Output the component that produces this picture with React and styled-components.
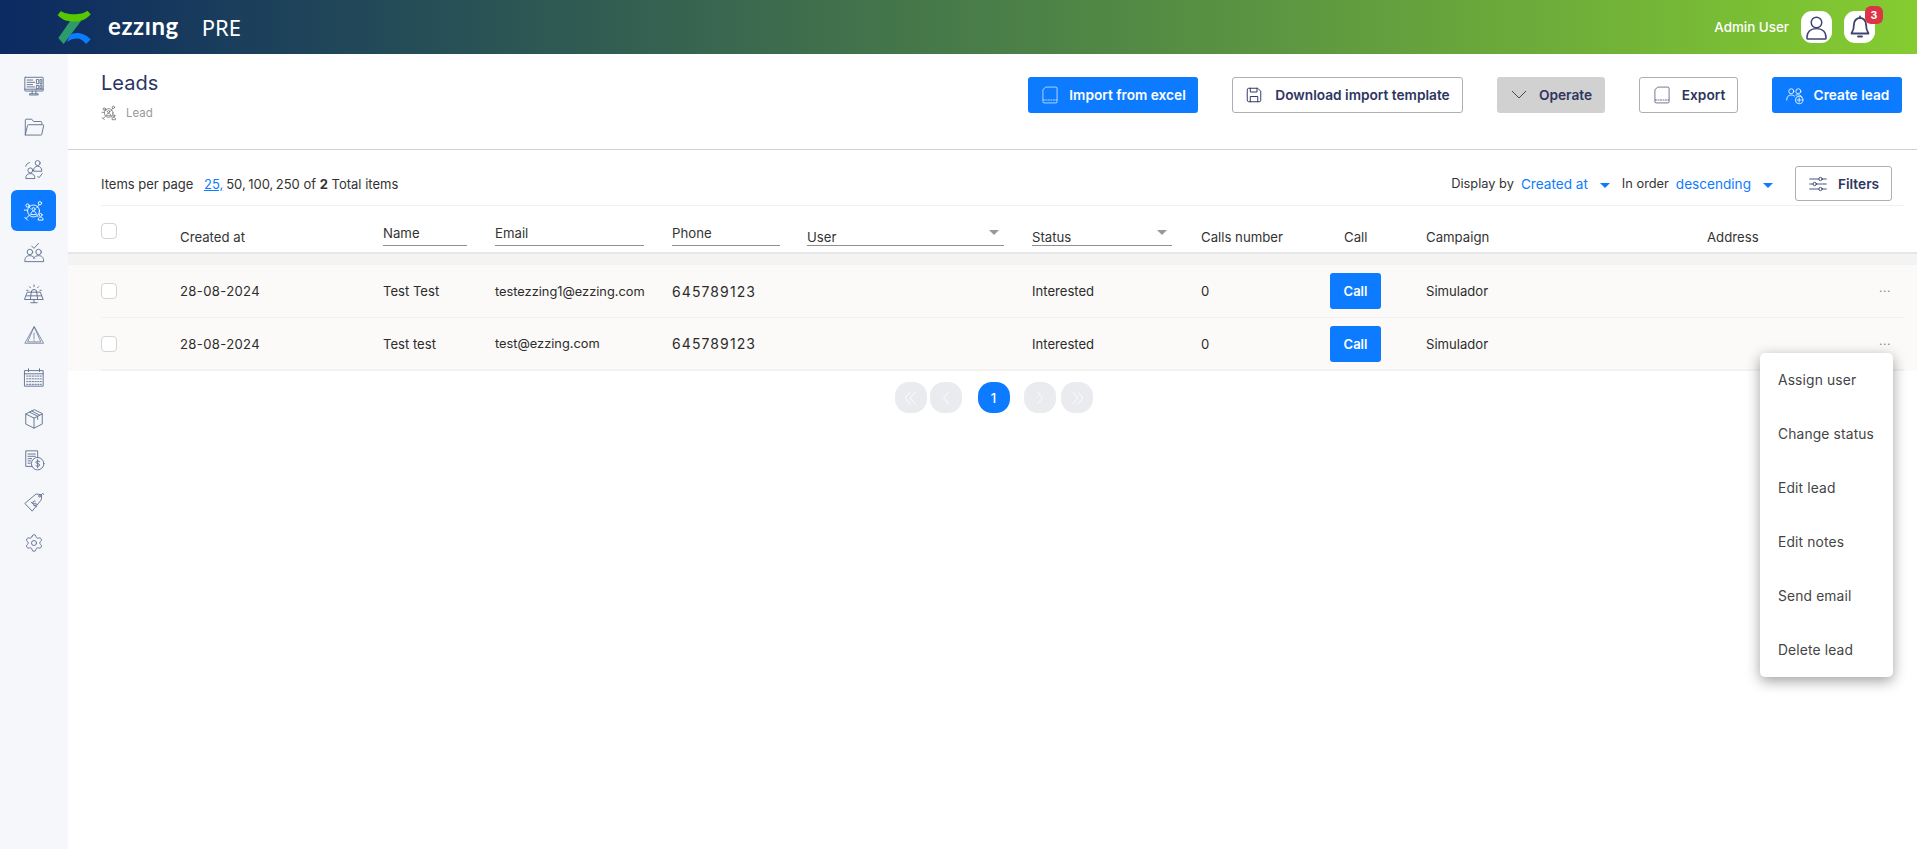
import React from 'react';
import styled, { createGlobalStyle } from 'styled-components';
import { Settings } from 'lucide-react';

const Global = createGlobalStyle`
  html, body { margin: 0; padding: 0; height: 100%; background: #fff; overflow: hidden; }
  body { font-family: "Inter", "Noto Sans", sans-serif; color: #2c2c2c; }
  #root { height: 100%; }
  * { box-sizing: border-box; }
`;

const Page = styled.div`display: flex; flex-direction: column; height: 849px;`;
const TopBar = styled.header`
  height: 54px; flex: none; display: flex; align-items: center;
  padding: 0 42px 0 57px;
  background: linear-gradient(90deg, #0b2a62 0%, #85cc30 100%);
`;
const Brand = styled.div`display: flex; align-items: center; flex: 1;`;
const BrandName = styled.span`
  font-family: "Lato", sans-serif; font-weight: 700; font-size: 24px; letter-spacing: .6px; color: #fff; margin-left: 17px; line-height: 1; position: relative; top: -1px;
`;
const Env = styled.span`font-family: "Noto Sans", sans-serif; font-size: 22px; color: #fff; margin-left: 23px;`;
const UserName = styled.span`font-size: 13.400px; font-weight: 500; color: #fff; margin-right: 12px;`;
const RoundBtn = styled.div`
  width: 31px; height: 32px; border-radius: 11px; background: #fff; display: flex; align-items: center; justify-content: center;
  position: relative; margin-left: ${p => p.$gap || 0}px; color: #3f4570;
`;
const Badge = styled.span`
  position: absolute; top: -5px; right: -8px; width: 18px; height: 18px; border-radius: 6px; background: #dc3545; color: #fff;
  font-size: 10.500px; font-weight: 700; display: flex; align-items: center; justify-content: center;
`;

const Body = styled.div`display: flex; flex: 1; min-height: 0; position: relative;`;
const Sidebar = styled.nav`
  width: 68px; flex: none; background: #f5f7fa; padding: 11px 1px 0 0; display: flex; flex-direction: column; align-items: center;
`;
const NavItem = styled.div`
  width: 45px; height: 41.600px; flex: none; border-radius: 6px; display: flex; align-items: center; justify-content: center;
  color: ${p => (p.$active ? '#fff' : '#5f6e8e')}; background: ${p => (p.$active ? '#0d7bff' : 'transparent')};
`;
const Main = styled.main`flex: 1; min-width: 0; display: flex; flex-direction: column; position: relative;`;
const PageHead = styled.div`
  height: 96px; flex: none; border-bottom: 1px solid #cfd2dc; display: flex; justify-content: space-between; padding: 23px 15px 0 33px;
`;
const TitleBlock = styled.div`display: flex; flex-direction: column; margin-top: -4px;`;
const Title = styled.h1`margin: 0; font-size: 20px; font-weight: 400; color: #2b3566; line-height: 20px;`;
const Crumb = styled.div`display: flex; align-items: center; gap: 9px; margin-top: 12px; font-size: 11.500px; color: #9a9a9a; height: 16px;`;
const CrumbIcon = styled.span`display: flex; color: #5c5c5c;`;
const Actions = styled.div`display: flex; align-items: flex-start; gap: 34px;`;
const ActionBtn = styled.button`
  height: ${p => p.$h || 36}px; width: ${p => p.$w}px; border-radius: 3px; display: flex; align-items: center; justify-content: center; gap: ${p => p.$g || 10}px;
  font-family: inherit; font-size: 13.700px; font-weight: 600; padding: 0; cursor: pointer; white-space: nowrap;
  ${p => p.$kind === 'primary' && 'background:#0d7bff;color:#fff;border:none;'}
  ${p => p.$kind === 'outline' && 'background:#fff;color:#2e3560;border:1px solid #aeaeb4;'}
  ${p => p.$kind === 'muted' && 'background:#d1d1d1;color:#2e3560;border:none;'}
`;

const Toolbar = styled.div`
  height: 56px; flex: none; margin: 0 13px 0 33px; padding: 16px 12px 0 0; border-bottom: 1px solid #f0f0f0; display: flex; align-items: flex-start; justify-content: space-between;
  font-size: 13px; color: #333;
`;
const Per = styled.div`display: flex; align-items: center; white-space: pre; height: 35px;`;
const PerLink = styled.a`color: #0d7bff; text-decoration: underline; margin: 0 3px 0 7px;`;
const PerList = styled.span`word-spacing: -1.200px;`;
const Sort = styled.div`display: flex; align-items: center; white-space: pre; height: 35px; font-size: 12.800px;`;
const SortVal = styled.span`color: #0d7bff; margin-left: 7px; font-size: 13.600px;`;
const Caret = styled.span`
  width: 0; height: 0; border-left: 5.500px solid transparent; border-right: 5.500px solid transparent; border-top: 5.500px solid #0d7bff;
  margin: 3px ${p => p.$mr || 12}px 0 12px;
`;

const Grid = styled.div`
  display: grid; grid-template-columns: 79px 203px 112px 177px 135px 225px 169px 129px 96px 281px 172px 1fr;
  padding-left: 33px;
`;
const HeadRow = styled(Grid)`height: 48px; flex: none; border-bottom: 2px solid #e6e6e6; font-size: 13.200px; color: #333;`;
const Band = styled.div`height: 11px; flex: none; background: #f3f3f3;`;
const Rows = styled.div`background: #fbfaf8;`;
const Row = styled(Grid)`height: ${p => p.$h}px; align-items: center; font-size: 13.100px; color: #2c2c2c;`;
const RowLine = styled.div`height: ${p => p.$h || 1}px; margin: 0 13px 0 33px; background: #f3f2f0;`;
const Num = styled.span`letter-spacing: ${p => p.$ls}px; font-size: ${p => p.$fs || 13.1}px;`;
const Mail = styled.span`font-size: 12.800px;`;
const Check = styled.span`
  width: 16px; height: 16px; border: 1px solid #d4d4d4; border-radius: 4px; background: #fff; display: block;
`;
const HeadCheck = styled(Check)`margin-top: 17px;`;
const HeadLabel = styled.div`padding-top: 23px; line-height: 16px; padding-left: ${p => p.$pl || 0}px;`;
const Filter = styled.div`
  width: ${p => p.$w}px; height: 24px; margin-top: 16px; border-bottom: 1px solid #909090; display: flex; justify-content: space-between;
  align-items: flex-end; line-height: ${p => (p.$select ? 16 : 20)}px; padding-bottom: ${p => (p.$select ? 0 : 2)}px; position: relative; font-size: 13.200px; color: #333;
`;
const FilterCaret = styled.span`
  position: absolute; right: 5px; top: 8px; width: 0; height: 0; border-left: 5px solid transparent; border-right: 5px solid transparent; border-top: 5px solid #999;
`;
const CallBtn = styled.button`
  width: 51px; height: 36px; background: #0d7bff; color: #fff; border: none; border-radius: 3px; font-family: inherit; font-size: 13px; font-weight: 600; padding: 0;
`;
const Dots = styled.span`font-size: 12px; color: #888; letter-spacing: .5px; line-height: 1; position: relative; top: -3px;`;

const Pager = styled.div`display: flex; justify-content: center; align-items: center; margin-top: 11px; padding-left: 2px;`;
const PageBtn = styled.span`
  width: 32px; height: 31px; border-radius: 14px; display: flex; align-items: center; justify-content: center;
  margin-left: ${p => p.$ml || 0}px; background: ${p => (p.$on ? '#0d7bff' : '#eaebef')}; color: #fff; font-size: 13px; font-weight: 500;
`;

const Menu = styled.div`
  position: absolute; left: 1692px; top: 299px; width: 133px; height: 324px; background: #fff; border-radius: 5px;
  box-shadow: 0 4px 14px rgba(0,0,0,.38); display: flex; flex-direction: column; z-index: 5;
`;
const MenuItem = styled.div`height: 54px; display: flex; align-items: center; padding-left: 18px; font-size: 13.800px; letter-spacing: .15px; color: #444; white-space: nowrap;`;

const Ico = ({ size = 22, sw = 1, children, vb = 24 }) => (
  <svg width={size} height={size} viewBox={`0 0 ${vb} ${vb}`} fill="none" stroke="currentColor" strokeWidth={sw} strokeLinecap="round" strokeLinejoin="round">{children}</svg>
);

const Logo = () => (
  <svg width="34" height="34" viewBox="20 15 103 103">
    <path d="M60 48 L93 48 L40 118 L24 100 Z" fill="#2e9a6c" />
    <path d="M22 30 L32 18 C45 30 95 32 112 17 L122 28 C108 45 90 50 75 50 C50 50 35 45 22 30 Z" fill="#57c800" />
    <path d="M58 92 C75 78 105 85 122 104 L108 118 C95 100 75 95 50 112 Z" fill="#0d7bff" />
  </svg>
);

const LeadIcon = ({ size = 22 }) => (
  <Ico size={size}>
    <circle cx="11.500" cy="12" r="6.500" />
    <circle cx="11.500" cy="10" r="1.700" />
    <path d="M8.500 15.500c0-2 1.300-3 3-3s3 1 3 3z" />
    <circle cx="5" cy="6" r="1.800" />
    <circle cx="18.500" cy="3.500" r="1.800" />
    <path d="M6.300 7.300 8 9M17.500 5 15 8.500M7 16.500 3 20.500M2 19l3 3" />
    <path d="M16.500 21.500c0-1.800 1-2.800 2.700-2.800s2.700 1 2.700 2.800z" />
    <circle cx="19.200" cy="16.300" r="1.600" />
    <path d="M1.500 11h3M15.500 17.500l1 .5" />
  </Ico>
);

const navIcons = [
  <Ico key="1"><rect x="2" y="2.500" width="20" height="15" rx=".5" /><path d="M4.500 5.500h6M4.500 8h8M4.500 10.500h6M4.500 13h8M15 5h2.200v4.500H15zM19 5h1.500v4.500H19zM15 11.500h2.200v3.500H15zM19 11h1.500v4H19zM2 15.500h20M10 17.500v3M14 17.500v3M7.500 20.500h9v1.300h-9z" /></Ico>,
  <Ico key="2"><path d="M2.500 20.500V4.500a1 1 0 0 1 1-1h6l2 2.500h8a1 1 0 0 1 1 1v2" /><path d="M2.500 20.500 5 10.200a1 1 0 0 1 1-.7h15.500a1 1 0 0 1 1 1.200L20.500 20a1 1 0 0 1-1 .8H3z" /></Ico>,
  <Ico key="3"><circle cx="16" cy="5.500" r="2.700" /><path d="M11.500 14c0-3.500 2-5 4.500-5s4.500 1.500 4.500 5z" /><circle cx="8" cy="13.500" r="2.700" /><path d="M3 22c0-3.500 2.200-5 5-5s5 1.500 5 5z" /><path d="M3 9c.5-2 2-3.500 4-4M16 20l1.500 1.500 3.500-4.500" /></Ico>,
  <LeadIcon key="4" />,
  <Ico key="5"><circle cx="7.500" cy="12" r="3" /><circle cx="17" cy="12" r="3" /><path d="M2 21.500c0-4 2.300-5.500 5.500-5.500 2.500 0 4.500 1.500 5.500 3M11.500 19c1-2 3-3 5.500-3 3.200 0 5.500 1.500 5.500 5.500M2 22.500h20.500M9.500 5.500l2.500 2.500 5-5.500" /></Ico>,
  <Ico key="6"><path d="M5 10h14l3 8H2zM4 14h16M9 10l-1 8M15 10l1 8M12 18v3M8.500 21.500h7" /><path d="M9 10a3 3 0 0 1 6 0" /><path d="M12 2v2M7 4l1.200 1.200M17 4l-1.200 1.200M18.500 8H20M4 8h1.500" /></Ico>,
  <Ico key="7" sw={.8}><path d="M12 3 2 21h20z" /><path d="M12 3.500 5 19.500h14zM12 10v6M12 17.500v.5" /></Ico>,
  <Ico key="8"><rect x="2" y="5" width="20" height="17" /><path d="M2 8.500h20M6 3v3M18 3v3" /><path strokeDasharray="1.500 1.500" d="M4 11h16M4 14h16M4 17h16M4 20h16" /></Ico>,
  <Ico key="9"><path d="M12 2 3 6.500v11L12 22l9-4.500v-11zM3 6.500 12 11l9-4.500M12 11v11M7 4.500l9 4.500v3.500M9.500 3.200 18 7.800" /></Ico>,
  <Ico key="10"><path d="M10 19H3V2h13v7.500M5.500 5.500h8M5.500 8h8M5.500 10.500h4M5.500 13h3M5.500 15.500h2.500" /><circle cx="16" cy="16" r="6.800" /><path d="M18.200 13.800c-.6-.9-4-1.100-4.200.5-.2 2 4.400 1.100 4.200 3.400-.2 1.500-3.600 1.400-4.300.4M16 11.500v9" /></Ico>,
  <Ico key="11"><path d="M14 3.500 2 13.500 10 22l10-12.500 .3-5z" /><circle cx="18" cy="5.500" r="1" /><path d="M20 3.800c1-1.500 2.500-1.500 2.500-.2" /><path d="M13.500 11c-1-.8-3.500.8-2.500 2s3-.2 3.500 1-2 2.800-3 1.800M9 12l5.500 5.500" transform="rotate(-5 12 14)" /></Ico>,
  <Settings key="12" size={20} strokeWidth={1.100} />,
];

const rows = [
  { name: 'Test Test', email: 'testezzing1@ezzing.com' },
  { name: 'Test test', email: 'test@ezzing.com' },
];

const Sheet = () => (
  <Ico size={20} sw={.8}><path d="M7.500 2.500H19a1.500 1.500 0 0 1 1.500 1.500v16a1.500 1.500 0 0 1-1.500 1.500H5A1.500 1.500 0 0 1 3.500 20V6z" /><path strokeDasharray="1.500 1.500" d="M4 18h16" /></Ico>
);

export default function App() {
  return (
    <Page>
      <Global />
      <TopBar>
        <Brand>
          <Logo />
          <BrandName>ezzıng</BrandName>
          <Env>PRE</Env>
        </Brand>
        <UserName>Admin User</UserName>
        <RoundBtn>
          <Ico size={27} sw={1.300}><circle cx="12" cy="7.500" r="4.700" /><path d="M3.500 21.500c0-6 3.500-8.500 8.500-8.500s8.500 2.500 8.500 8.500c0 .5-.3.8-.8.8H4.300c-.5 0-.8-.3-.8-.8z" /></Ico>
        </RoundBtn>
        <RoundBtn $gap={12}>
          <Ico size={24} sw={1.800}><path d="M12 3a6 6 0 0 0-6 6c0 6-1.500 8-2.500 9.500h17C19.500 17 18 15 18 9a6 6 0 0 0-6-6zM12 1.500V3M10 21.500h4" /></Ico>
          <Badge>3</Badge>
        </RoundBtn>
      </TopBar>
      <Body>
        <Sidebar>
          {navIcons.map((ic, i) => <NavItem key={i} $active={i === 3}>{ic}</NavItem>)}
        </Sidebar>
        <Main>
          <PageHead>
            <TitleBlock>
              <Title>Leads</Title>
              <Crumb><CrumbIcon><LeadIcon size={16} /></CrumbIcon>Lead</Crumb>
            </TitleBlock>
            <Actions>
              <ActionBtn $kind="primary" $w={170} $g={9}><Sheet />Import from excel</ActionBtn>
              <ActionBtn $kind="outline" $w={231} $g={12}>
                <Ico size={18} sw={1.300}><path d="M3 5a2 2 0 0 1 2-2h12l4 4v12a2 2 0 0 1-2 2H5a2 2 0 0 1-2-2z" /><path d="M7 3v5h9V3M7 21v-7h10v7" /></Ico>
                Download import template
              </ActionBtn>
              <ActionBtn $kind="muted" $w={108} $g={11}>
                <Ico size={18} sw={1.200}><path d="M3 7l9 9 9-9" /></Ico>Operate
              </ActionBtn>
              <ActionBtn $kind="outline" $w={99} $g={10}><Sheet />Export</ActionBtn>
              <ActionBtn $kind="primary" $w={130} $g={9}>
                <Ico size={20}><circle cx="7.500" cy="7.500" r="3" /><circle cx="16" cy="7.500" r="3" /><path d="M2 18c0-4 2-6 5.500-6 1.500 0 3 .5 4 1.500M13 12c3.500-1 7 .5 7.500 3" /><circle cx="17" cy="18" r="4.500" /><path d="M17 15.500v5M14.500 18h5" /></Ico>
                Create lead
              </ActionBtn>
            </Actions>
          </PageHead>
          <Toolbar>
            <Per>Items per page <PerLink>25,</PerLink><PerList>50, 100, 250</PerList> of <b>2</b> Total items</Per>
            <Sort>
              Display by<SortVal>Created at</SortVal><Caret />In order<SortVal>descending</SortVal><Caret $mr={22} />
              <ActionBtn as="div" $kind="outline" $w={97} $h={35} $g={10}>
                <Ico size={20}><path d="M2 6h11M17 6h5M2 12h4M10 12h12M2 18h11M17 18h5" /><circle cx="15" cy="6" r="2" /><circle cx="8" cy="12" r="2" /><circle cx="15" cy="18" r="2" /></Ico>
                Filters
              </ActionBtn>
            </Sort>
          </Toolbar>
          <HeadRow>
            <div><HeadCheck /></div>
            <HeadLabel>Created at</HeadLabel>
            <Filter $w={84}>Name</Filter>
            <Filter $w={149}>Email</Filter>
            <Filter $w={108}>Phone</Filter>
            <Filter $w={197} $select>User<FilterCaret /></Filter>
            <Filter $w={140} $select>Status<FilterCaret /></Filter>
            <HeadLabel>Calls number</HeadLabel>
            <HeadLabel $pl={14}>Call</HeadLabel>
            <HeadLabel>Campaign</HeadLabel>
            <HeadLabel>Address</HeadLabel>
          </HeadRow>
          <Band />
          <Rows>
            {rows.map((r, i) => (
              <React.Fragment key={r.name}>
                <Row $h={i === 0 ? 52 : 51}>
                  <Check />
                  <Num $ls={0.35}>28-08-2024</Num>
                  <span>{r.name}</span>
                  <Mail>{r.email}</Mail>
                  <Num $ls={1.1} $fs={14}>645789123</Num>
                  <span />
                  <span>Interested</span>
                  <Num $ls={0}>0</Num>
                  <div><CallBtn>Call</CallBtn></div>
                  <span>Simulador</span>
                  <span />
                  <Dots>...</Dots>
                </Row>
                <RowLine $h={i === 0 ? 1 : 2} />
              </React.Fragment>
            ))}
          </Rows>
          <Pager>
            <PageBtn><Ico size={20}><path d="M11 5l-6 7 6 7M17 5l-6 7 6 7" /></Ico></PageBtn>
            <PageBtn $ml={3}><Ico size={20}><path d="M15 5l-6 7 6 7" /></Ico></PageBtn>
            <PageBtn $on $ml={16}>1</PageBtn>
            <PageBtn $ml={14}><Ico size={20}><path d="M9 5l6 7-6 7" /></Ico></PageBtn>
            <PageBtn $ml={5}><Ico size={20}><path d="M7 5l6 7-6 7M13 5l6 7-6 7" /></Ico></PageBtn>
          </Pager>
          <Menu>
            {['Assign user', 'Change status', 'Edit lead', 'Edit notes', 'Send email', 'Delete lead'].map(t => <MenuItem key={t}>{t}</MenuItem>)}
          </Menu>
        </Main>
      </Body>
    </Page>
  );
}
